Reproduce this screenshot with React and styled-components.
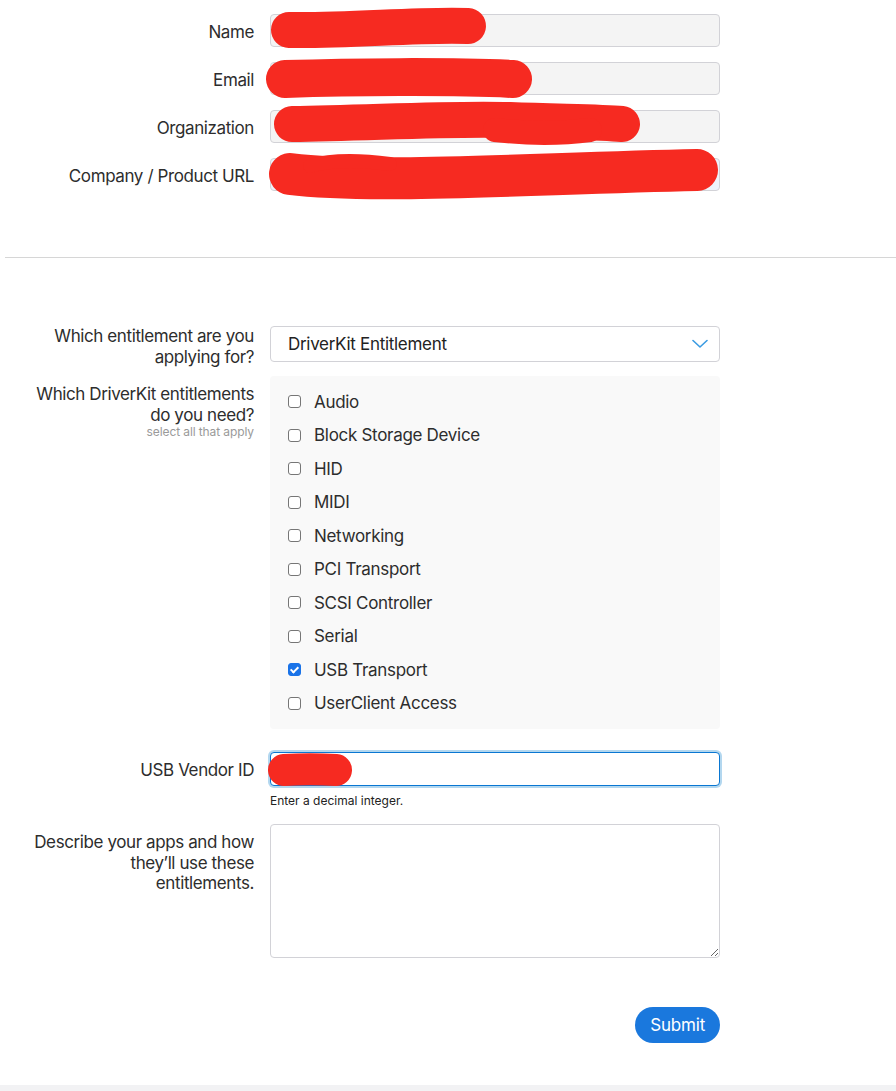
import React from "react";
import styled, { createGlobalStyle } from "styled-components";

const entitlements = [
  { name: "Audio" },
  { name: "Block Storage Device" },
  { name: "HID" },
  { name: "MIDI" },
  { name: "Networking" },
  { name: "PCI Transport" },
  { name: "SCSI Controller" },
  { name: "Serial" },
  { name: "USB Transport", checked: true },
  { name: "UserClient Access" },
];

// hand-drawn red marks that cover the personal data in the screenshot
const marks = {
  name: [{ d: "M19,16 C80,17 150,10 198,12", w: 36 }],
  email: [{ d: "M15,17 C80,15 180,14 243,17", w: 38 }],
  org: [
    { d: "M22,14 C100,13 180,8 240,10 C290,12 330,12 352,14", w: 36 },
    { d: "M225,20 C260,24 290,24 320,20", w: 24 },
  ],
  url: [
    { d: "M20,16 C100,26 250,16 427,12", w: 42 },
    { d: "M40,8 C60,2 90,2 120,6", w: 14 },
  ],
  vendor: [{ d: "M14,18 C30,17 50,17 66,18", w: 32 }],
};

function Redact({ strokes }) {
  return (
    <Scribble width="450" height="34">
      {strokes.map((s, i) => (
        <path
          key={i}
          d={s.d}
          fill="none"
          stroke="#f62a21"
          strokeWidth={s.w}
          strokeLinecap="round"
          strokeLinejoin="round"
        />
      ))}
    </Scribble>
  );
}

function Lines({ text }) {
  return text.map((line, i) => (
    <React.Fragment key={i}>
      {i > 0 && <br />}
      {line}
    </React.Fragment>
  ));
}

function App() {
  return (
    <Page>
      <GlobalStyle />
      <Main>
        <ContactSection>
          <Row>
            <Label>Name</Label>
            <Field>
              <TextInput readOnly defaultValue="" />
              <Redact strokes={marks.name} />
            </Field>
          </Row>
          <Row>
            <Label>Email</Label>
            <Field>
              <TextInput readOnly defaultValue="" />
              <Redact strokes={marks.email} />
            </Field>
          </Row>
          <Row>
            <Label>Organization</Label>
            <Field>
              <TextInput readOnly defaultValue="" />
              <Redact strokes={marks.org} />
            </Field>
          </Row>
          <Row $gap={0}>
            <Label>Company / Product URL</Label>
            <Field>
              <TextInput $autofill defaultValue="" />
              <Redact strokes={marks.url} />
            </Field>
          </Row>
        </ContactSection>

        <Divider />

        <RequestSection>
          <Row $gap={9}>
            <Label $offset={0}>
              <Lines text={["Which entitlement are you", "applying for?"]} />
            </Label>
            <Field>
              <Select defaultValue="driverkit">
                <option value="driverkit">DriverKit Entitlement</option>
              </Select>
              <Chevron width="16" height="10" viewBox="0 0 16 10">
                <path d="M1 1.5 L8 8 L15 1.5" fill="none" stroke="#3a9be2" strokeWidth="1.6" strokeLinecap="round" strokeLinejoin="round" />
              </Chevron>
            </Field>
          </Row>
          <Row $gap={23}>
            <Label>
              <Lines text={["Which DriverKit entitlements", "do you need?"]} />
              <Hint>select all that apply</Hint>
            </Label>
            <CheckPanel>
              {entitlements.map(item => (
                <CheckItem key={item.name}>
                  <Check defaultChecked={!!item.checked} />
                  {item.name}
                </CheckItem>
              ))}
            </CheckPanel>
          </Row>
          <Row>
            <Label>USB Vendor ID</Label>
            <div>
              <Field>
                <TextInput $focused defaultValue="" />
                <Redact strokes={marks.vendor} />
              </Field>
              <Help>Enter a decimal integer.</Help>
            </div>
          </Row>
          <Row $gap={49}>
            <Label>
              <Lines text={["Describe your apps and how", "they’ll use these", "entitlements."]} />
            </Label>
            <TextArea />
          </Row>
          <Row $gap={0}>
            <span />
            <Actions>
              <SubmitButton type="button">Submit</SubmitButton>
            </Actions>
          </Row>
        </RequestSection>
      </Main>
      <Footer />
    </Page>
  );
}

const GlobalStyle = createGlobalStyle`
  body {
    margin: 0;
    background: #fff;
    font-family: Inter, "Noto Sans", sans-serif;
    color: #333;
  }
`;

const Page = styled.div`
  min-height: 100vh;
  display: flex;
  flex-direction: column;
`;

const Main = styled.main`
  padding-bottom: 42px;
`;

const ContactSection = styled.section`
  padding-top: 14px;
  padding-bottom: 66px;
`;

const RequestSection = styled.section`
  padding-top: 68px;
`;

const Divider = styled.hr`
  margin: 0 0 0 5px;
  border: none;
  height: 1px;
  background: #d6d6d6;
`;

const Row = styled.div`
  display: grid;
  grid-template-columns: 254px 450px;
  column-gap: 16px;
  margin-bottom: ${p => (p.$gap ?? 15)}px;
`;

const Label = styled.label`
  text-align: right;
  white-space: nowrap;
  font-size: 17px;
  line-height: 20.5px;
  letter-spacing: -0.4px;
  padding-top: ${p => (p.$offset ?? 8)}px;
  color: #2d2d2d;
`;

const Hint = styled.span`
  display: block;
  font-size: 12px;
  line-height: 14px;
  letter-spacing: -0.1px;
  color: #9a9a9a;
`;

const Field = styled.div`
  position: relative;
`;

const TextInput = styled.input`
  box-sizing: border-box;
  display: block;
  width: 450px;
  height: ${p => (p.$focused ? 34 : 33)}px;
  margin: 0;
  padding: 0 16px;
  font: inherit;
  font-size: 17px;
  border: 1px solid ${p => (p.$focused ? "#0a77d2" : "#d2d2d7")};
  border-radius: 4px;
  background: ${p => (p.$autofill ? "#eef3fb" : p.$focused ? "#fff" : "#f4f4f4")};
  box-shadow: ${p => (p.$focused ? "0 0 0 2px #b3d7ef" : "none")};
  outline: none;
`;

const Scribble = styled.svg`
  position: absolute;
  left: 0;
  top: 0;
  overflow: visible;
  pointer-events: none;
`;

const Select = styled.select`
  box-sizing: border-box;
  display: block;
  width: 450px;
  height: 36px;
  margin: 0;
  padding: 0 40px 0 17px;
  appearance: none;
  font: inherit;
  font-size: 17px;
  letter-spacing: -0.3px;
  color: #222;
  background: #fff;
  border: 1px solid #d2d2d7;
  border-radius: 4px;
  outline: none;
`;

const Chevron = styled.svg`
  position: absolute;
  right: 12px;
  top: 13px;
  pointer-events: none;
`;

const CheckPanel = styled.div`
  background: #f9f9f9;
  border-radius: 4px;
  padding: 9px 0 9px 18px;
`;

const CheckItem = styled.label`
  display: flex;
  align-items: center;
  gap: 13px;
  height: 33.5px;
  font-size: 17px;
  letter-spacing: -0.3px;
  color: #2d2d2d;
`;

const Check = styled.input.attrs({ type: "checkbox" })`
  appearance: none;
  box-sizing: border-box;
  margin: 0;
  width: 13px;
  height: 13px;
  border: 1px solid #767676;
  border-radius: 3px;
  background: #fff;
  display: grid;
  place-content: center;

  &:checked {
    background: #1a73e8;
    border-color: #1a73e8;
  }

  &:checked::after {
    content: "";
    width: 3px;
    height: 6px;
    border: solid #fff;
    border-width: 0 2px 2px 0;
    transform: translateY(-1px) rotate(45deg);
  }
`;

const Help = styled.div`
  margin-top: 7px;
  font-size: 12px;
  line-height: 16px;
  color: #222;
`;

const TextArea = styled.textarea`
  box-sizing: border-box;
  display: block;
  width: 450px;
  height: 134px;
  margin: 0;
  padding: 8px 16px;
  font: inherit;
  font-size: 17px;
  border: 1px solid #d2d2d7;
  border-radius: 4px;
  background: #fff;
  resize: vertical;
  outline: none;
`;

const Actions = styled.div`
  display: flex;
  justify-content: flex-end;
`;

const SubmitButton = styled.button`
  height: 36px;
  padding: 0 15px;
  border: none;
  border-radius: 18px;
  background: #1a78dd;
  color: #fff;
  font: inherit;
  font-size: 17px;
  letter-spacing: -0.2px;
  cursor: pointer;
`;

const Footer = styled.footer`
  margin-top: auto;
  height: 7px;
  background: #f2f2f4;
`;

export default App;
